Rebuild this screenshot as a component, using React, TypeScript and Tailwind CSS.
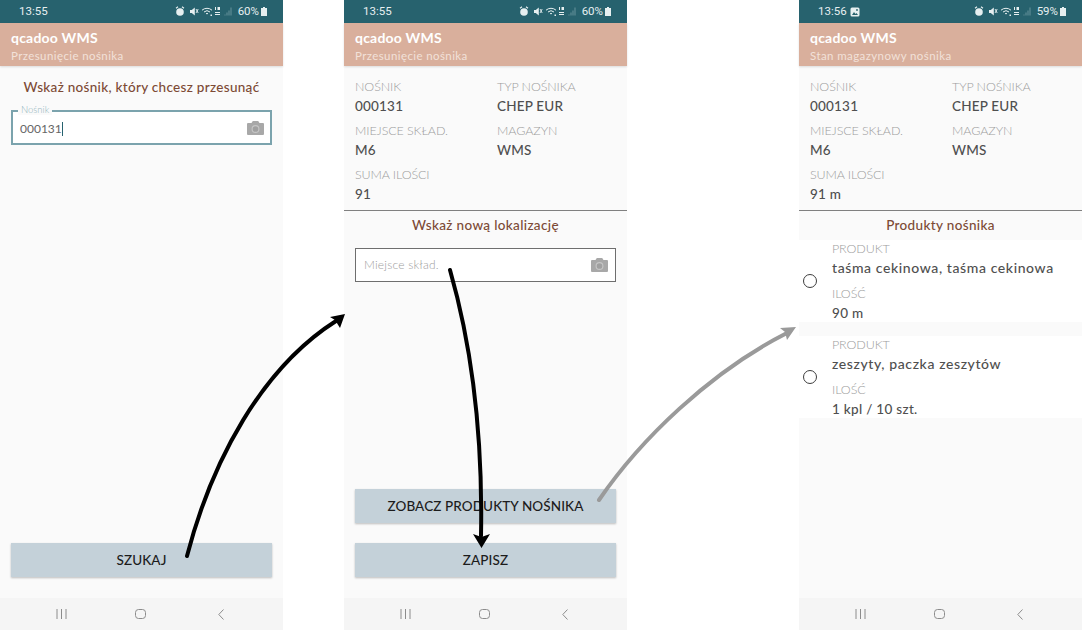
import React from "react";

const F = "font-['Lato','Noto_Sans',sans-serif]";

function Camera() {
  return (
    <svg width="17" height="14" viewBox="0 0 17 14" className="shrink-0">
      <path fill="#a8a8a8" d="M1 2h3.500l1.300-2h5.400l1.300 2H16a1 1 0 0 1 1 1v10a1 1 0 0 1-1 1H1a1 1 0 0 1-1-1V3a1 1 0 0 1 1-1z" />
      <circle cx="8.500" cy="8" r="3.400" fill="#a0a0a0" stroke="#c6c6c6" strokeWidth="1.100" />
    </svg>
  );
}

function StatusIcons({ pct }: { pct: string }) {
  return (
    <div className="flex items-center gap-[3px] text-[#e6eff0]">
      <svg width="60" height="11" viewBox="0 0 60 11">
        <circle cx="5" cy="6" r="3.800" fill="#e6eff0" />
        <path d="M1 2.200l2-1.500M9 2.200L7 .7" stroke="#e6eff0" strokeWidth="1.100" />
        <path d="M15 4h1.800l3-2.500v8l-3-2.500H15z" fill="#e6eff0" />
        <path d="M21 3l2.200 4M23.200 3L21 7" stroke="#e6eff0" strokeWidth="0.900" />
        <path d="M27 4.200a7.500 7.500 0 0 1 10 0M29 6a4.500 4.500 0 0 1 6 0M31 7.800a1.800 1.800 0 0 1 2 0" stroke="#e6eff0" strokeWidth="1" fill="none" />
        <path d="M35.500 8.500h1.500v1.500h-1.500z" fill="#e6eff0" />
        <path d="M40 1h1v3h-1zM42.500 1H45v3h-2.500zM40 6h5v.9h-5zM40 8h5v.9h-5z" fill="#e6eff0" />
        <path d="M50 9.500v-1M52 9.500v-3M54 9.500v-5M56 9.500v-8" stroke="#6f9aa2" strokeWidth="0.900" />
      </svg>
      <span className="text-[11.5px] leading-none">{pct}</span>
      <svg width="6" height="9" viewBox="0 0 6 9" className="-ml-[1px]">
        <path d="M2 0h2v1h2v8H0V1h2z" fill="#e6eff0" />
      </svg>
    </div>
  );
}

function Header({ time, subtitle, pct, picture }: { time: string; subtitle: string; pct: string; picture?: boolean }) {
  return (
    <div className="shrink-0">
      <div className="h-[23px] bg-[#27626e] flex items-center justify-between pl-[19px] pr-[16px] text-[11.5px] text-[#e6eff0] font-['Roboto',sans-serif]">
        <div className="flex items-center gap-[3px]">
          <span>{time}</span>
          {picture && (
            <svg width="10" height="10" viewBox="0 0 10 10">
              <rect x="0.500" y="0.500" width="9" height="9" rx="1.500" fill="#e6eff0" />
              <path d="M2 8l2-3 1.500 2 1-1 1.500 2z" fill="#27626e" />
              <circle cx="7" cy="3" r="0.900" fill="#27626e" />
            </svg>
          )}
        </div>
        <StatusIcons pct={pct} />
      </div>
      <div className="h-[43px] bg-[#d9af9c] pl-[11px] pt-[6px] shadow-[0_1px_2px_rgba(0,0,0,0.12)]">
        <div className="text-[14px] leading-[17px] font-bold text-white tracking-[0.2px]">qcadoo WMS</div>
        <div className="mt-[3px] text-[11.5px] leading-[14px] text-[#f2e1d9] tracking-[0.4px]">{subtitle}</div>
      </div>
    </div>
  );
}

function NavBar() {
  return (
    <div className="h-[32px] bg-[#f5f5f5] shrink-0 flex items-center justify-between pl-[56px] pr-[59px]">
      <svg width="11" height="10" viewBox="0 0 11 10">
        <path d="M1 0v10M5.500 0v10M10 0v10" stroke="#8c8c8c" strokeWidth="1" />
      </svg>
      <svg width="11" height="10" viewBox="0 0 11 10" className="-ml-[5px]">
        <rect x="0.500" y="0.500" width="10" height="9" rx="3" fill="none" stroke="#8c8c8c" strokeWidth="1" />
      </svg>
      <svg width="6" height="11" viewBox="0 0 6 11">
        <path d="M5.500 0.500L0.800 5.500l4.700 5" fill="none" stroke="#8c8c8c" strokeWidth="1" />
      </svg>
    </div>
  );
}

function Btn({ children }: { children: React.ReactNode }) {
  return (
    <div className="h-[34px] bg-[#c4d1d9] shadow-[0_1px_2px_rgba(0,0,0,0.25)] flex items-center justify-center text-[13.5px] font-medium tracking-[0.1px] text-[#1c1c1c]">
      {children}
    </div>
  );
}

function Field({ label, value, className = "" }: { label: string; value: string; className?: string }) {
  return (
    <div className={className}>
      <div className="text-[12.5px] leading-[16px] font-light text-[#9c9c9c] tracking-[-0.1px]">{label}</div>
      <div className="mt-[2px] text-[13.5px] leading-[18px] font-medium text-[#4f4f4f] tracking-[0.2px]">{value}</div>
    </div>
  );
}

function Info({ sum }: { sum: string }) {
  return (
    <div className="h-[145px] shrink-0 pl-[11px] pt-[13px] border-b border-[#808080] flex flex-col gap-[8px]">
      <div className="flex">
        <Field label="NOŚNIK" value="000131" className="w-[142px]" />
        <Field label="TYP NOŚNIKA" value="CHEP EUR" />
      </div>
      <div className="flex">
        <Field label="MIEJSCE SKŁAD." value="M6" className="w-[142px]" />
        <Field label="MAGAZYN" value="WMS" />
      </div>
      <Field label="SUMA ILOŚCI" value={sum} />
    </div>
  );
}

function Product({ name, qty }: { name: string; qty: string }) {
  return (
    <div className="h-[82px] bg-white flex items-center pl-[4px]">
      <div className="w-[14px] h-[14px] rounded-full border border-[#3d3d3d] shrink-0" />
      <div className="ml-[15px]">
        <div className="text-[12.5px] leading-[16px] font-light text-[#9c9c9c] tracking-[-0.1px]">PRODUKT</div>
        <div className="mt-[2px] text-[14px] leading-[18px] font-medium text-[#4f4f4f] tracking-[0.6px]">{name}</div>
        <div className="mt-[9px] text-[12.5px] leading-[16px] font-light text-[#9c9c9c] tracking-[-0.1px]">ILOŚĆ</div>
        <div className="mt-[2px] text-[13.5px] leading-[18px] font-medium text-[#4f4f4f] tracking-[0.3px]">{qty}</div>
      </div>
    </div>
  );
}

function Phone({ className = "", children }: { className?: string; children: React.ReactNode }) {
  return <div className={`w-[283px] h-[630px] flex flex-col bg-[#fafafa] shrink-0 ${className}`}>{children}</div>;
}

export default function App() {
  return (
    <div className={`relative w-[1082px] h-[630px] bg-white overflow-hidden flex ${F}`}>
      <Phone>
        <Header time="13:55" subtitle="Przesunięcie nośnika" pct="60%" />
        <div className="flex-1 flex flex-col px-[11px]">
          <div className="mt-[12px] text-center text-[13.5px] leading-[18px] font-medium text-[#7d4a35] tracking-[0.3px]">
            Wskaż nośnik, który chcesz przesunąć
          </div>
          <div className="relative mt-[14px] h-[35px] border-2 border-[#7ba3ad] bg-white flex items-center justify-between pl-[7px] pr-[6px]">
            <span className="absolute left-[5px] -top-[7px] bg-[#fafafa] px-[3px] text-[9.5px] leading-[10px] font-light text-[#8fb3bb]">Nośnik</span>
            <span className="text-[12px] text-[#666666] border-r border-[#27626e] leading-[14px] mt-[2px]">000131</span>
            <Camera />
          </div>
          <div className="flex-1" />
          <Btn>SZUKAJ</Btn>
          <div className="h-[21px] shrink-0" />
        </div>
        <NavBar />
      </Phone>

      <Phone className="ml-[61px]">
        <Header time="13:55" subtitle="Przesunięcie nośnika" pct="60%" />
        <Info sum="91" />
        <div className="flex-1 flex flex-col px-[11px]">
          <div className="mt-[5px] text-center text-[13.5px] leading-[18px] font-medium text-[#7d4a35] tracking-[0.35px]">
            Wskaż nową lokalizację
          </div>
          <div className="mt-[14px] h-[34px] border border-[#6e6e6e] bg-white flex items-center justify-between pl-[8px] pr-[7px]">
            <span className="text-[12px] font-light text-[#9c9c9c] tracking-[0.2px]">Miejsce skład.</span>
            <Camera />
          </div>
          <div className="flex-1" />
          <Btn>ZOBACZ PRODUKTY NOŚNIKA</Btn>
          <div className="h-[20px] shrink-0" />
          <Btn>ZAPISZ</Btn>
          <div className="h-[21px] shrink-0" />
        </div>
        <NavBar />
      </Phone>

      <Phone className="ml-[172px]">
        <Header time="13:56" subtitle="Stan magazynowy nośnika" pct="59%" picture />
        <Info sum="91 m" />
        <div className="h-[29px] shrink-0 flex items-center justify-center text-[13.5px] font-medium text-[#7d4a35] tracking-[0.35px]">
          Produkty nośnika
        </div>
        <div className="flex flex-col gap-[14px]">
          <Product name="taśma cekinowa, taśma cekinowa" qty="90 m" />
          <Product name="zeszyty, paczka zeszytów" qty="1 kpl / 10 szt." />
        </div>
        <div className="flex-1" />
        <NavBar />
      </Phone>

      <svg className="absolute inset-0 pointer-events-none" width="1082" height="630" viewBox="0 0 1082 630">
        <path d="M187 556C212 460 262 368 336 321" fill="none" stroke="#000" strokeWidth="4" strokeLinecap="round" />
        <path d="M345 314L330 317L335 320L340 328Z" fill="#000" />
        <path d="M450 270C470 340 483 430 481 536" fill="none" stroke="#000" strokeWidth="4" strokeLinecap="round" />
        <path d="M481.500 548L473 534L481.500 537L490 534Z" fill="#000" />
        <path d="M599 500C640 440 710 372 787 333" fill="none" stroke="#9a9a9a" strokeWidth="4" strokeLinecap="round" />
        <path d="M796 327L780 328L785 332L787 340Z" fill="#9a9a9a" />
      </svg>
    </div>
  );
}
